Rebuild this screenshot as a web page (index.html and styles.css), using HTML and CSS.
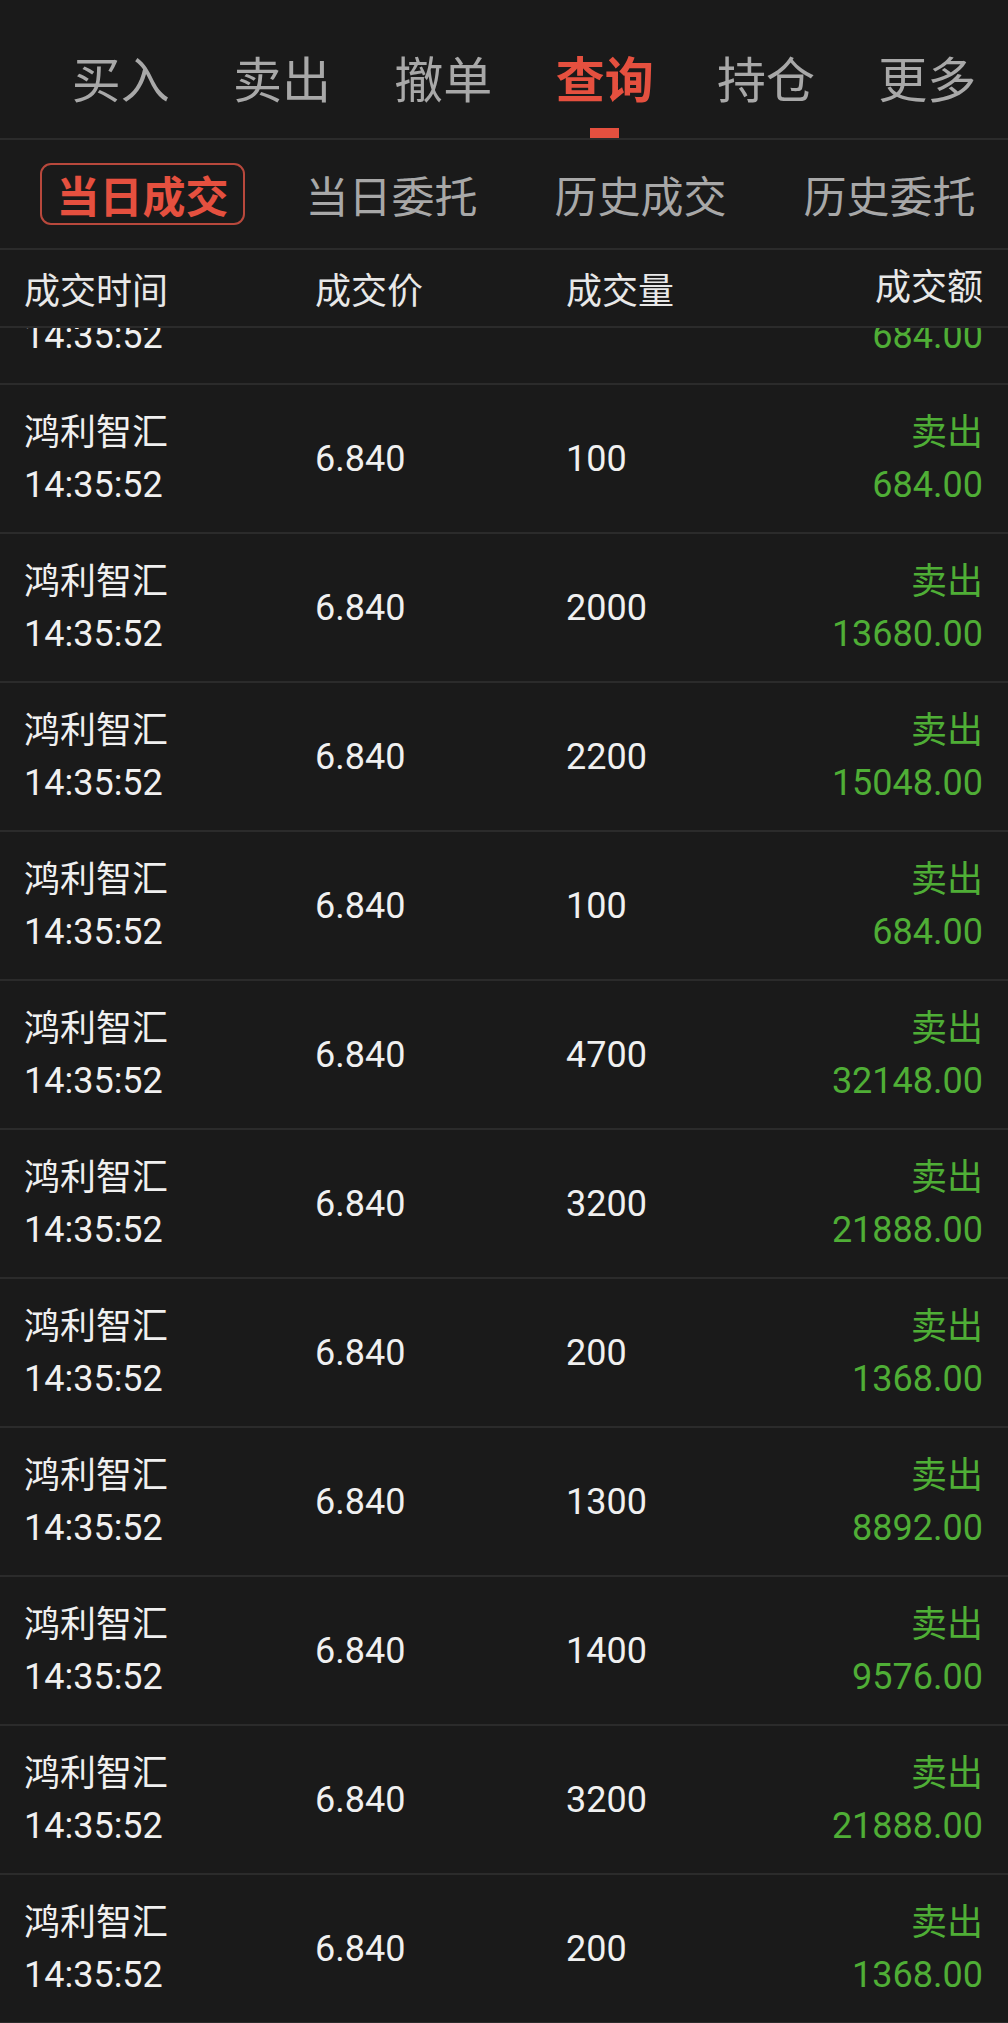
FILE: index.html
```html
<!DOCTYPE html>
<html>
<head>
    <meta charset="utf-8" />
    <title>查询 - 当日成交</title>
    <link rel="stylesheet" href="styles.css">
</head>
<body>
<div id="main">
    <div class="topbar">
        <div class="tab">买入</div>
        <div class="tab">卖出</div>
        <div class="tab">撤单</div>
        <div class="tab active">查询<span class="bar"></span></div>
        <div class="tab">持仓</div>
        <div class="tab">更多</div>
    </div>
    <div class="subbar">
        <div class="subtab active">当日成交</div>
        <div class="subtab">当日委托</div>
        <div class="subtab">历史成交</div>
        <div class="subtab">历史委托</div>
    </div>
    <div class="row head">
        <div>成交时间</div>
        <div>成交价</div>
        <div>成交量</div>
        <div class="amount">成交额</div>
    </div>
    <div class="list">
        <div class="row item first">
            <div class="name">鸿利智汇<br>14:35:52</div>
            <div>6.840</div>
            <div>100</div>
            <div class="amount sell">卖出<br>684.00</div>
        </div>
        <div class="row item">
            <div class="name">鸿利智汇<br>14:35:52</div>
            <div>6.840</div>
            <div>100</div>
            <div class="amount sell">卖出<br>684.00</div>
        </div>
        <div class="row item">
            <div class="name">鸿利智汇<br>14:35:52</div>
            <div>6.840</div>
            <div>2000</div>
            <div class="amount sell">卖出<br>13680.00</div>
        </div>
        <div class="row item">
            <div class="name">鸿利智汇<br>14:35:52</div>
            <div>6.840</div>
            <div>2200</div>
            <div class="amount sell">卖出<br>15048.00</div>
        </div>
        <div class="row item">
            <div class="name">鸿利智汇<br>14:35:52</div>
            <div>6.840</div>
            <div>100</div>
            <div class="amount sell">卖出<br>684.00</div>
        </div>
        <div class="row item">
            <div class="name">鸿利智汇<br>14:35:52</div>
            <div>6.840</div>
            <div>4700</div>
            <div class="amount sell">卖出<br>32148.00</div>
        </div>
        <div class="row item">
            <div class="name">鸿利智汇<br>14:35:52</div>
            <div>6.840</div>
            <div>3200</div>
            <div class="amount sell">卖出<br>21888.00</div>
        </div>
        <div class="row item">
            <div class="name">鸿利智汇<br>14:35:52</div>
            <div>6.840</div>
            <div>200</div>
            <div class="amount sell">卖出<br>1368.00</div>
        </div>
        <div class="row item">
            <div class="name">鸿利智汇<br>14:35:52</div>
            <div>6.840</div>
            <div>1300</div>
            <div class="amount sell">卖出<br>8892.00</div>
        </div>
        <div class="row item">
            <div class="name">鸿利智汇<br>14:35:52</div>
            <div>6.840</div>
            <div>1400</div>
            <div class="amount sell">卖出<br>9576.00</div>
        </div>
        <div class="row item">
            <div class="name">鸿利智汇<br>14:35:52</div>
            <div>6.840</div>
            <div>3200</div>
            <div class="amount sell">卖出<br>21888.00</div>
        </div>
        <div class="row item">
            <div class="name">鸿利智汇<br>14:35:52</div>
            <div>6.840</div>
            <div>200</div>
            <div class="amount sell">卖出<br>1368.00</div>
        </div>
    </div>
</div>
</body>
</html>
```
FILE: styles.css
```css
body {
    margin: 0;
    background-color: #1a1a1a;
    font-family: Roboto, "Noto Sans CJK SC", sans-serif;
    color: #f0f0f0;
}
#main {
    width: 1008px;
    height: 2023px;
    overflow: hidden;
}
.topbar {
    display: flex;
    height: 138px;
    padding-left: 40px;
    border-bottom: 2px solid #2b2b2b;
}
.tab {
    flex: 1;
    display: flex;
    flex-direction: column;
    align-items: center;
    padding-top: 57px;
    font-size: 49px;
    line-height: 50px;
    color: #a8a8a8;
}
.tab.active {
    color: #e5503f;
    font-weight: bold;
}
.bar {
    display: block;
    width: 29px;
    height: 10px;
    margin-top: 21px;
    background-color: #e5503f;
}
.subbar {
    display: flex;
    align-items: center;
    gap: 44px;
    height: 108px;
    padding-left: 40px;
    border-bottom: 2px solid #2b2b2b;
}
.subtab {
    box-sizing: border-box;
    width: 205px;
    height: 62px;
    display: flex;
    align-items: center;
    justify-content: center;
    border: 2px solid transparent;
    border-radius: 11px;
    font-size: 43px;
    color: #a8a8a8;
}
.subtab.active {
    border-color: #b8483c;
    color: #e5503f;
    font-weight: bold;
}
.row {
    display: grid;
    grid-template-columns: 291px 251px 1fr auto;
    align-items: center;
    padding: 0 25px 0 24px;
    font-size: 36px;
    border-bottom: 2px solid #2b2b2b;
}
.head {
    height: 76px;
    color: #e8e8e8;
}
.list {
    height: 1695px;
    overflow: hidden;
}
.item {
    box-sizing: border-box;
    height: 149px;
}
.item.first {
    margin-top: -92px;
}
.name,
.amount {
    line-height: 52px;
}
.amount {
    text-align: right;
}
.sell {
    color: #4fae36;
}
```
